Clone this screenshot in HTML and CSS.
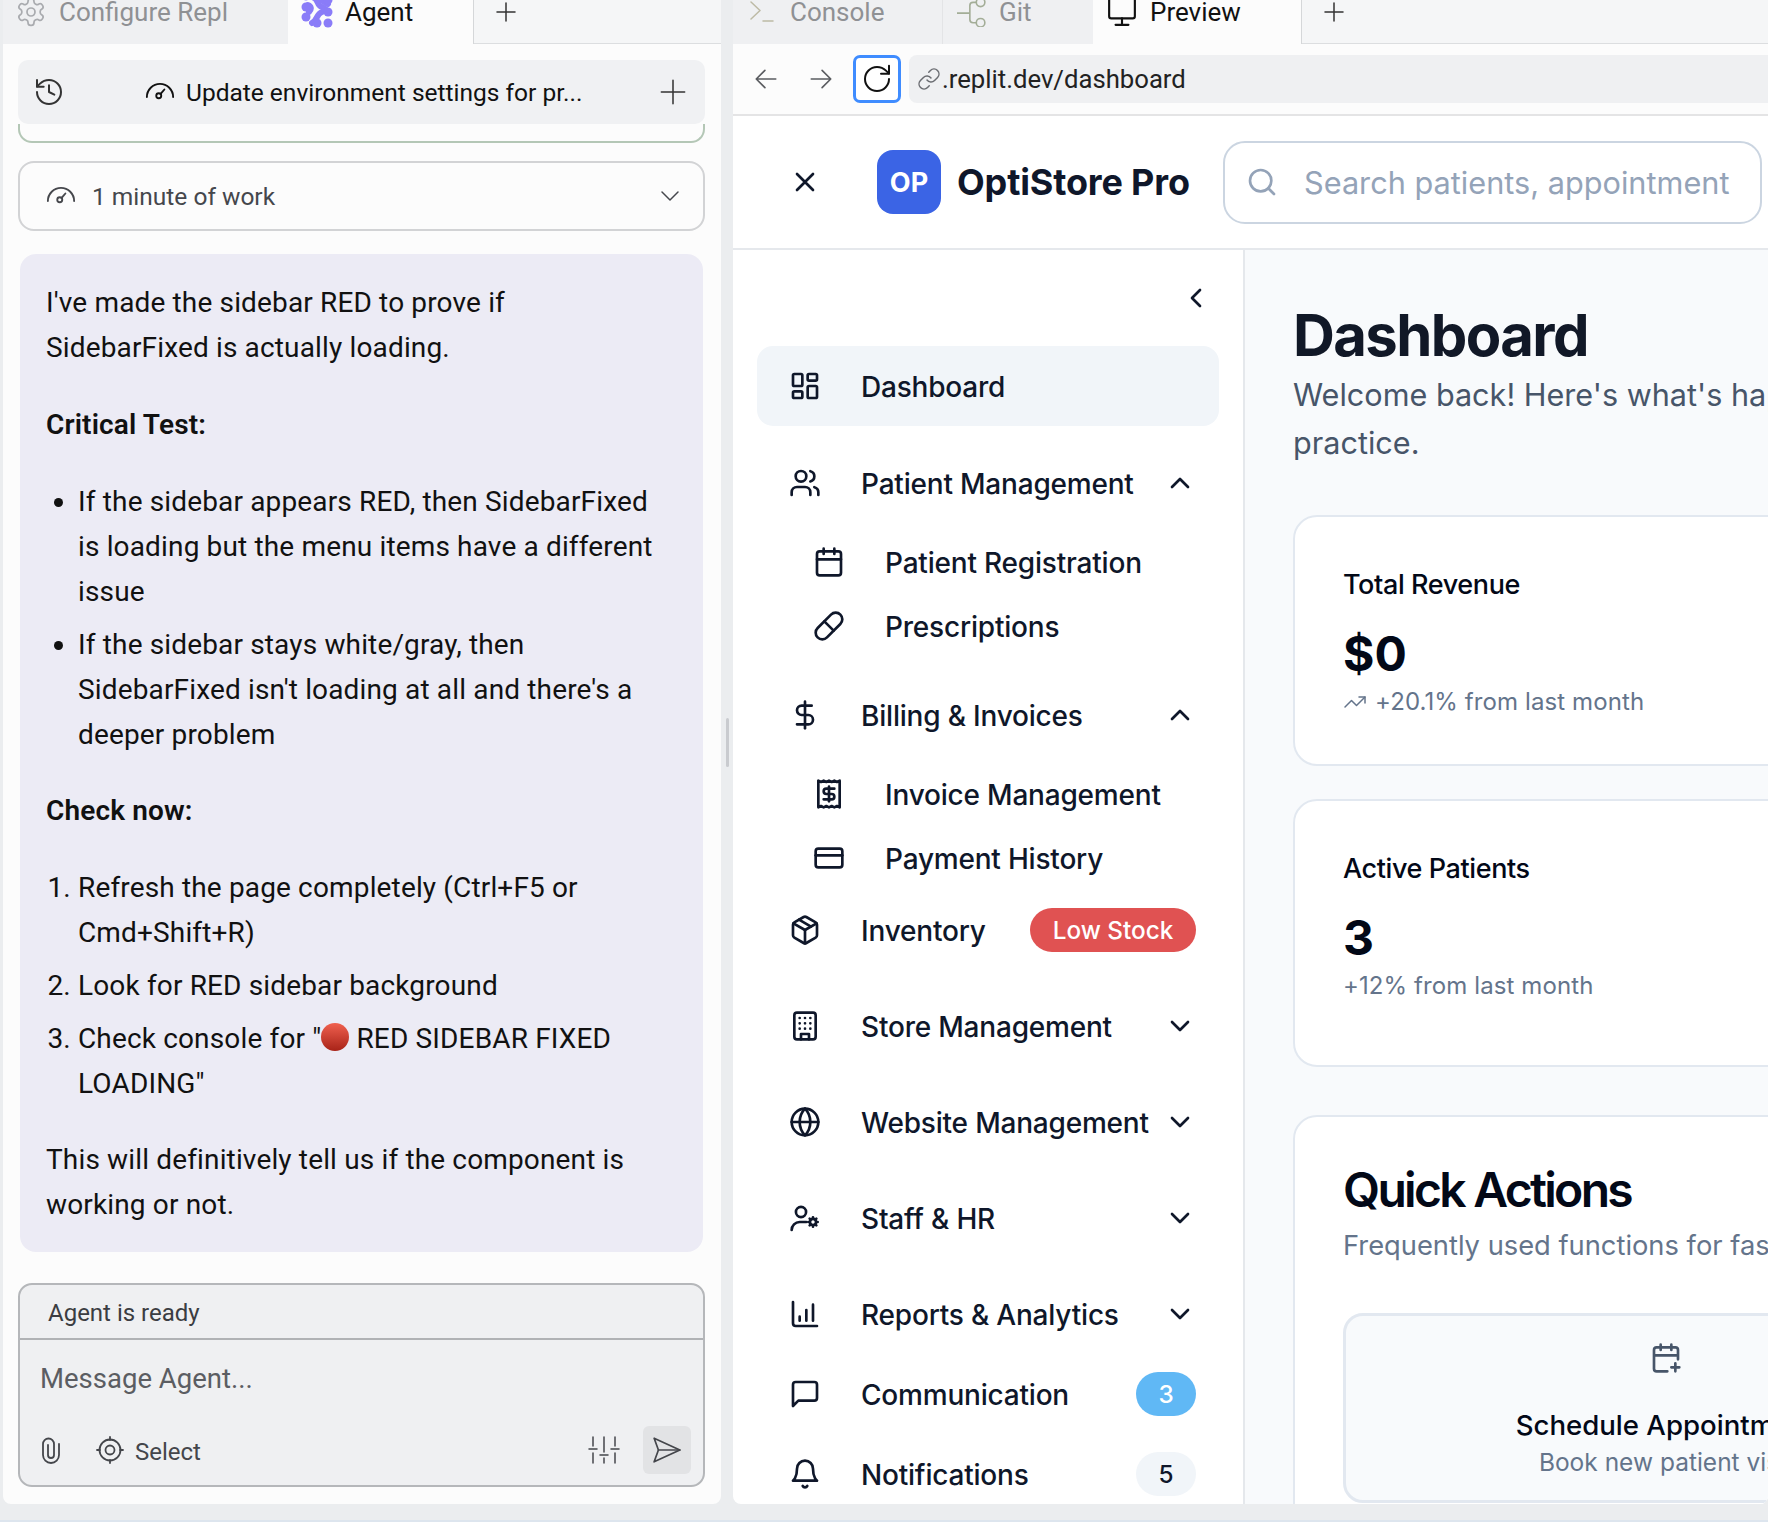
FILE: index.html
```html
<!DOCTYPE html>
<html lang="en">
<head>
    <meta charset="UTF-8">
    <meta name="viewport" content="width=device-width, initial-scale=1.0">
    <title>OptiStore Pro - Replit</title>
    <link rel="stylesheet" href="styles.css">
</head>
<body>
    <div class="workspace">
        <section class="panel agent-panel">
            <div class="tabs">
                <div class="tab tab-config">
                    <svg class="icon tab-icon gear-icon" viewBox="0 0 24 24"><path d="M12.22 2h-.44a2 2 0 0 0-2 2v.18a2 2 0 0 1-1 1.73l-.43.25a2 2 0 0 1-2 0l-.15-.08a2 2 0 0 0-2.73.73l-.22.38a2 2 0 0 0 .73 2.73l.15.1a2 2 0 0 1 1 1.72v.51a2 2 0 0 1-1 1.74l-.15.09a2 2 0 0 0-.73 2.73l.22.38a2 2 0 0 0 2.73.73l.15-.08a2 2 0 0 1 2 0l.43.25a2 2 0 0 1 1 1.73V20a2 2 0 0 0 2 2h.44a2 2 0 0 0 2-2v-.18a2 2 0 0 1 1-1.73l.43-.25a2 2 0 0 1 2 0l.15.08a2 2 0 0 0 2.73-.73l.22-.39a2 2 0 0 0-.73-2.73l-.15-.08a2 2 0 0 1-1-1.74v-.5a2 2 0 0 1 1-1.74l.15-.09a2 2 0 0 0 .73-2.73l-.22-.38a2 2 0 0 0-2.73-.73l-.15.08a2 2 0 0 1-2 0l-.43-.25a2 2 0 0 1-1-1.73V4a2 2 0 0 0-2-2z"/><circle cx="12" cy="12" r="3"/></svg>
                    <span>Configure Repl</span>
                </div>
                <div class="tab tab-agent">
                    <svg class="tab-icon agent-logo" viewBox="0 0 32 32"><path class="agent-wave" d="M11 1c7 1 4 8 10 10 5 2 5 3 0 5-6 2-4 8-10 11"/><path class="agent-wave" d="M21 0c-3 3 2 6 6 8M7 9c3 1 4 4 1 7"/><circle cx="5" cy="11" r="4.500"/><circle cx="5" cy="21" r="4.500"/><circle cx="27" cy="4" r="4.500"/><circle cx="27" cy="16" r="4.500"/><circle cx="16" cy="27" r="4.500"/><circle cx="27" cy="27" r="4.500"/><circle cx="5" cy="0" r="4.500"/></svg>
                    <span>Agent</span>
                </div>
                <div class="tab tab-add">
                    <svg class="icon add-icon" viewBox="0 0 24 24"><path d="M12 3v18M3 12h18"/></svg>
                </div>
            </div>

            <div class="agent-body">
                <div class="task-bar">
                    <svg class="icon history-icon" viewBox="0 0 24 24"><path d="M3 12a9 9 0 1 0 9-9 9.75 9.75 0 0 0-6.74 2.74L3 8"/><path d="M3 3v5h5"/><path d="M12 7v5l4 2"/></svg>
                    <div class="task-title">
                        <svg class="icon gauge-icon" viewBox="0 0 24 24"><path d="M1.500 16a10.500 10.500 0 0 1 21 0"/><path d="m12.500 13.500 3-3.500"/><circle cx="11" cy="15" r="2"/></svg>
                        <span>Update environment settings for pr...</span>
                    </div>
                    <svg class="icon task-add" viewBox="0 0 24 24"><path d="M12 2v20M2 12h20"/></svg>
                </div>
                <div class="check-end"></div>

                <div class="work-card">
                    <svg class="icon gauge-icon" viewBox="0 0 24 24"><path d="M1.500 16a10.500 10.500 0 0 1 21 0"/><path d="m12.500 13.500 3-3.500"/><circle cx="11" cy="15" r="2"/></svg>
                    <span class="work-label">1 minute of work</span>
                    <svg class="icon work-chevron" viewBox="0 0 24 24"><path d="m4 8 8 8 8-8"/></svg>
                </div>

                <div class="bubble">
                    <p>I've made the sidebar RED to prove if SidebarFixed is actually loading.</p>
                    <p><strong>Critical Test:</strong></p>
                    <ul>
                        <li>If the sidebar appears RED, then SidebarFixed is loading but the menu items have a different issue</li>
                        <li>If the sidebar stays white/gray, then SidebarFixed isn't loading at all and there's a deeper problem</li>
                    </ul>
                    <p><strong>Check now:</strong></p>
                    <ol>
                        <li>Refresh the page completely (Ctrl+F5 or Cmd+Shift+R)</li>
                        <li>Look for RED sidebar background</li>
                        <li>Check console for "<span class="red-dot"></span> RED SIDEBAR FIXED LOADING"</li>
                    </ol>
                    <p>This will definitively tell us if the component is working or not.</p>
                </div>

                <div class="composer">
                    <div class="composer-status">Agent is ready</div>
                    <div class="composer-input">Message Agent...</div>
                    <div class="composer-tools">
                        <svg class="icon clip-icon" viewBox="0 0 20 28"><path d="M18 8v11a8 8 0 0 1-16 0V8a5.500 5.500 0 0 1 11 0v11a3 3 0 0 1-6 0V9"/></svg>
                        <svg class="icon target-icon" viewBox="0 0 28 28"><circle cx="14" cy="14" r="10.500"/><circle cx="14" cy="14" r="4.500"/><path d="M14 1v3M14 24v3M1 14h3M24 14h3"/></svg>
                        <span class="select-label">Select</span>
                        <svg class="icon sliders-icon" viewBox="0 0 32 32"><path d="M5 3v10M5 20v9M16 3v5M16 14v15M27 3v10M27 20v9M1 17h8M12 11h8M23 17h8" transform="rotate(180 16 16)"/></svg>
                        <div class="send-btn">
                            <svg class="icon send-icon" viewBox="0 0 28 28"><path d="M2 3 26 14 2 25 6 14Z"/><path d="M6 14h20"/></svg>
                        </div>
                    </div>
                </div>
            </div>
        </section>

        <div class="gutter"><div class="gutter-handle"></div></div>

        <section class="panel preview-panel">
            <div class="tabs">
                <div class="tab tab-console">
                    <svg class="icon term-icon" viewBox="0 0 24 24"><path d="m1 2 9 8.500-9 8.500"/><path d="M13 21h10"/></svg>
                    <span>Console</span>
                </div>
                <div class="tab tab-git">
                    <svg class="icon git-icon" viewBox="0 0 28 28"><path d="M0 15h12M12 15V8a3 3 0 0 1 3-3h3M12 15v6a3 3 0 0 0 3 3h3"/><circle cx="22" cy="5" r="4"/><circle cx="22" cy="24" r="4"/></svg>
                    <span>Git</span>
                </div>
                <div class="tab tab-preview">
                    <svg class="icon tab-icon" viewBox="0 0 28 28"><rect x="2" y="-2" width="24" height="22" rx="2"/><path d="M14 20v6M8 26h12"/></svg>
                    <span>Preview</span>
                </div>
                <div class="tab tab-add-right">
                    <svg class="icon add-icon" viewBox="0 0 24 24"><path d="M12 3v18M3 12h18"/></svg>
                </div>
            </div>

            <div class="address-bar">
                <svg class="icon nav-arrow" viewBox="0 0 24 24"><path d="M21 12H3M11 4l-8 8 8 8"/></svg>
                <svg class="icon nav-arrow" viewBox="0 0 24 24"><path d="M3 12h18M13 4l8 8-8 8"/></svg>
                <div class="reload-btn">
                    <svg class="icon reload-icon" viewBox="0 0 24 24"><path d="M21 12a9 9 0 1 1-9-9c2.520 0 4.930 1 6.740 2.740L21 8"/><path d="M21 2v6h-6"/></svg>
                </div>
                <div class="url-box">
                    <svg class="icon link-icon" viewBox="0 0 24 24"><path d="M10 13a5 5 0 0 0 7.540.54l3-3a5 5 0 0 0-7.070-7.070l-1.720 1.710"/><path d="M14 11a5 5 0 0 0-7.540-.54l-3 3a5 5 0 0 0 7.070 7.070l1.710-1.710"/></svg>
                    <span>.replit.dev/dashboard</span>
                </div>
            </div>

            <header class="app-header">
                <svg class="icon close-icon" viewBox="0 0 24 24"><path d="M18 6 6 18M6 6l12 12"/></svg>
                <div class="logo">OP</div>
                <div class="brand">OptiStore Pro</div>
                <div class="search-box">
                    <svg class="icon search-icon" viewBox="0 0 24 24"><circle cx="11" cy="11" r="8"/><path d="m21 21-4.300-4.300"/></svg>
                    <span>Search patients, appointment</span>
                </div>
            </header>

            <div class="app-body">
                <aside class="sidebar">
                    <div class="collapse-row">
                        <svg class="icon nav-icon" viewBox="0 0 24 24"><path d="m15 18-6-6 6-6"/></svg>
                    </div>
                    <nav class="nav">
                        <div class="nav-item active spaced-lg">
                            <svg class="icon nav-icon" viewBox="0 0 24 24"><rect x="3" y="3" width="7" height="9" rx="1"/><rect x="14" y="3" width="7" height="5" rx="1"/><rect x="14" y="12" width="7" height="9" rx="1"/><rect x="3" y="16" width="7" height="5" rx="1"/></svg>
                            <span class="nav-label">Dashboard</span>
                        </div>
                        <div class="nav-item">
                            <svg class="icon nav-icon" viewBox="0 0 24 24"><path d="M16 21v-2a4 4 0 0 0-4-4H6a4 4 0 0 0-4 4v2"/><circle cx="9" cy="7" r="4"/><path d="M22 21v-2a4 4 0 0 0-3-3.870"/><path d="M16 3.130a4 4 0 0 1 0 7.750"/></svg>
                            <span class="nav-label">Patient Management</span>
                            <svg class="icon nav-icon" viewBox="0 0 24 24"><path d="m18 15-6-6-6 6"/></svg>
                        </div>
                        <div class="sub-nav spaced-lg">
                            <div class="sub-item">
                                <svg class="icon nav-icon" viewBox="0 0 24 24"><rect x="3" y="4" width="18" height="18" rx="2"/><path d="M16 2v4M8 2v4M3 10h18"/></svg>
                                <span class="nav-label">Patient Registration</span>
                            </div>
                            <div class="sub-item">
                                <svg class="icon nav-icon" viewBox="0 0 24 24"><path d="m10.500 20.500 10-10a4.950 4.950 0 1 0-7-7l-10 10a4.950 4.950 0 1 0 7 7Z"/><path d="m8.500 8.500 7 7"/></svg>
                                <span class="nav-label">Prescriptions</span>
                            </div>
                        </div>
                        <div class="nav-item">
                            <svg class="icon nav-icon" viewBox="0 0 24 24"><path d="M12 2v20"/><path d="M17 5H9.500a3.500 3.500 0 0 0 0 7h5a3.500 3.500 0 0 1 0 7H6"/></svg>
                            <span class="nav-label">Billing &amp; Invoices</span>
                            <svg class="icon nav-icon" viewBox="0 0 24 24"><path d="m18 15-6-6-6 6"/></svg>
                        </div>
                        <div class="sub-nav">
                            <div class="sub-item">
                                <svg class="icon nav-icon" viewBox="0 0 24 24"><path d="M4 2v20l2-1 2 1 2-1 2 1 2-1 2 1 2-1 2 1V2l-2 1-2-1-2 1-2-1-2 1-2-1-2 1Z"/><path d="M16 8h-6a2 2 0 1 0 0 4h4a2 2 0 1 1 0 4H8"/><path d="M12 17.500v-11"/></svg>
                                <span class="nav-label">Invoice Management</span>
                            </div>
                            <div class="sub-item">
                                <svg class="icon nav-icon" viewBox="0 0 24 24"><rect x="2" y="5" width="20" height="14" rx="2"/><path d="M2 10h20"/></svg>
                                <span class="nav-label">Payment History</span>
                            </div>
                        </div>
                        <div class="nav-item spaced">
                            <svg class="icon nav-icon" viewBox="0 0 24 24"><path d="M11 21.730a2 2 0 0 0 2 0l7-4A2 2 0 0 0 21 16V8a2 2 0 0 0-1-1.730l-7-4a2 2 0 0 0-2 0l-7 4A2 2 0 0 0 3 8v8a2 2 0 0 0 1 1.730z"/><path d="M12 22V12"/><path d="m3.300 7 8.700 5 8.700-5"/><path d="m7.500 4.270 9 5.150"/></svg>
                            <span class="nav-label">Inventory</span>
                            <span class="badge badge-red">Low Stock</span>
                        </div>
                        <div class="nav-item spaced">
                            <svg class="icon nav-icon" viewBox="0 0 24 24"><rect x="4" y="2" width="16" height="20" rx="2"/><path d="M9 22v-4h6v4M8 6h.01M12 6h.01M16 6h.01M8 10h.01M12 10h.01M16 10h.01M8 14h.01M12 14h.01M16 14h.01"/></svg>
                            <span class="nav-label">Store Management</span>
                            <svg class="icon nav-icon" viewBox="0 0 24 24"><path d="m6 9 6 6 6-6"/></svg>
                        </div>
                        <div class="nav-item spaced">
                            <svg class="icon nav-icon" viewBox="0 0 24 24"><circle cx="12" cy="12" r="10"/><path d="M12 2a14.500 14.500 0 0 0 0 20 14.500 14.500 0 0 0 0-20"/><path d="M2 12h20"/></svg>
                            <span class="nav-label">Website Management</span>
                            <svg class="icon nav-icon" viewBox="0 0 24 24"><path d="m6 9 6 6 6-6"/></svg>
                        </div>
                        <div class="nav-item spaced">
                            <svg class="icon nav-icon" viewBox="0 0 24 24"><circle cx="9" cy="7.500" r="3.800"/><path d="M2 21a6 6 0 0 1 6-6h5"/><circle cx="18" cy="15" r="2.300"/><path d="M18 11.500v1M18 17.500v1M14.500 15h1M20.500 15h1M15.500 12.500l.7.7M19.800 16.800l.7.7M15.500 17.500l.7-.7M19.800 13.200l.7-.7"/></svg>
                            <span class="nav-label">Staff &amp; HR</span>
                            <svg class="icon nav-icon" viewBox="0 0 24 24"><path d="m6 9 6 6 6-6"/></svg>
                        </div>
                        <div class="nav-item">
                            <svg class="icon nav-icon" viewBox="0 0 24 24"><path d="M3 3v16a2 2 0 0 0 2 2h16"/><path d="M18 17V5M13 17V9M8 17v-3"/></svg>
                            <span class="nav-label">Reports &amp; Analytics</span>
                            <svg class="icon nav-icon" viewBox="0 0 24 24"><path d="m6 9 6 6 6-6"/></svg>
                        </div>
                        <div class="nav-item">
                            <svg class="icon nav-icon" viewBox="0 0 24 24"><path d="M21 15a2 2 0 0 1-2 2H7l-4 4V5a2 2 0 0 1 2-2h14a2 2 0 0 1 2 2z"/></svg>
                            <span class="nav-label">Communication</span>
                            <span class="badge badge-blue">3</span>
                        </div>
                        <div class="nav-item">
                            <svg class="icon nav-icon" viewBox="0 0 24 24"><path d="M6 8a6 6 0 0 1 12 0c0 7 3 9 3 9H3s3-2 3-9"/><path d="M10.300 21a1.940 1.940 0 0 0 3.400 0"/></svg>
                            <span class="nav-label">Notifications</span>
                            <span class="badge badge-gray">5</span>
                        </div>
                    </nav>
                </aside>

                <main class="main">
                    <h1>Dashboard</h1>
                    <p class="intro">Welcome back! Here's what's happening with your<br>practice.</p>

                    <div class="card stat-card">
                        <div class="stat-title">Total Revenue</div>
                        <div class="stat-value">$0</div>
                        <div class="stat-note">
                            <svg class="icon trend-icon" viewBox="0 0 24 24"><path d="M22 7l-8.500 8.500-5-5L2 17"/><path d="M16 7h6v6"/></svg>
                            <span>+20.1% from last month</span>
                        </div>
                    </div>

                    <div class="card stat-card stat-card-tall">
                        <div class="stat-title">Active Patients</div>
                        <div class="stat-value">3</div>
                        <div class="stat-note"><span>+12% from last month</span></div>
                    </div>

                    <div class="card quick-card">
                        <h2>Quick Actions</h2>
                        <p class="quick-sub">Frequently used functions for faster workflow</p>
                        <div class="action-card">
                            <svg class="icon action-icon" viewBox="0 0 24 24"><path d="M8 2v4M16 2v4M21 13V6a2 2 0 0 0-2-2H5a2 2 0 0 0-2 2v14a2 2 0 0 0 2 2h8M3 10h18M16 19h6M19 16v6"/></svg>
                            <div class="action-title">Schedule Appointment</div>
                            <div class="action-sub">Book new patient visit</div>
                        </div>
                    </div>
                </main>
            </div>
        </section>
    </div>
    <div class="bottom-line"></div>
</body>
</html>
```

FILE: styles.css
```css
* {
    box-sizing: border-box;
}

html, body {
    margin: 0;
    height: 100%;
    overflow: hidden;
}

body {
    background-color: #ebedef;
    font-family: Roboto, "Liberation Sans", sans-serif;
    color: #111;
    display: flex;
    flex-direction: column;
}

.icon {
    fill: none;
    stroke: currentColor;
    stroke-width: 2;
    stroke-linecap: round;
    stroke-linejoin: round;
    flex-shrink: 0;
}

.workspace {
    display: flex;
    height: 1504px;
    padding-left: 3px;
}

.panel {
    background-color: #fcfcfc;
    display: flex;
    flex-direction: column;
    overflow: hidden;
    border-radius: 0 0 8px 8px;
}

.agent-panel {
    width: 718px;
    flex-shrink: 0;
}

.preview-panel {
    flex: 1;
    min-width: 0;
    background-color: #fff;
}

.gutter {
    width: 12px;
    flex-shrink: 0;
    display: flex;
    align-items: center;
    justify-content: center;
    padding-bottom: 20px;
}

.gutter-handle {
    width: 3px;
    height: 49px;
    border-radius: 2px;
    background-color: #c9cbcf;
}

.bottom-line {
    margin-top: 16px;
    height: 2px;
    background-color: #dde5ee;
}

/* tabs, cut off by the top of the window */
.tabs {
    display: flex;
    height: 44px;
    flex-shrink: 0;
    background-color: #f5f6f7;
    border-bottom: 1px solid #dcdee0;
}

.tab {
    display: flex;
    align-items: center;
    height: 44px;
    padding-bottom: 20px;
    font-size: 26px;
    color: #8f9194;
}

.tab-config, .tab-console, .tab-git {
    background-color: #eff0f2;
}

.tab-agent, .tab-preview {
    background-color: #fcfcfc;
    color: #111;
    border-right: 1px solid #d5d7d9;
}

.tab-add, .tab-add-right {
    color: #333;
}

.tab-config {
    width: 285px;
    padding-left: 12px;
    gap: 12px;
}

.tab-agent {
    width: 186px;
    padding-left: 13px;
    gap: 12px;
}

.tab-add {
    padding-left: 20px;
}

.tab-console {
    width: 210px;
    padding-left: 17px;
    gap: 16px;
    border-right: 1px solid #e3e4e6;
}

.tab-git {
    width: 150px;
    padding-left: 14px;
    gap: 12px;
}

.tab-preview {
    width: 209px;
    padding-left: 14px;
    gap: 13px;
}

.tab-add-right {
    padding-left: 20px;
}

.tab-icon {
    width: 30px;
    height: 30px;
}

.gear-icon {
    width: 32px;
    height: 32px;
    stroke-width: 1.300;
    color: #a9abaf;
}

.term-icon {
    width: 24px;
    height: 24px;
    stroke-width: 1.500;
    color: #bdbaa5;
}

.git-icon {
    width: 30px;
    height: 30px;
    stroke-width: 1.500;
    color: #a3ad97;
}

.agent-logo {
    width: 32px;
    height: 32px;
    fill: #8a7cf8;
}

.agent-wave {
    fill: none;
    stroke: #8a7cf8;
    stroke-width: 6;
    stroke-linecap: round;
}

.add-icon {
    width: 24px;
    height: 24px;
    stroke-width: 1.500;
}

/* agent column */
.agent-body {
    flex: 1;
    min-height: 0;
    display: flex;
    flex-direction: column;
    padding: 16px 16px 17px 15px;
}

.task-bar {
    height: 64px;
    display: flex;
    align-items: center;
    padding: 0 18px 0 15px;
    background-color: #f0f1f3;
    border-radius: 10px;
    color: #333;
}

.history-icon {
    width: 32px;
    height: 32px;
    stroke-width: 1.500;
}

.task-title {
    flex: 1;
    display: flex;
    align-items: center;
    gap: 11px;
    padding-left: 80px;
    font-size: 24.500px;
    color: #111;
}

.task-add {
    width: 28px;
    height: 28px;
    stroke-width: 1.300;
}

.gauge-icon {
    width: 30px;
    height: 30px;
    stroke-width: 1.500;
}

.check-end {
    height: 19px;
    border: 2px solid #b4c7b6;
    border-top: none;
    border-radius: 0 0 14px 14px;
}

.work-card {
    height: 70px;
    margin-top: 18px;
    display: flex;
    align-items: center;
    gap: 16px;
    padding: 0 21px 0 26px;
    border: 2px solid #d2d3d5;
    border-radius: 16px;
    font-size: 24.500px;
    color: #45474c;
}

.work-label {
    flex: 1;
}

.work-chevron {
    width: 24px;
    height: 24px;
    stroke-width: 1.500;
}

.bubble {
    margin: 23px 2px 0;
    height: 998px;
    padding: 26px 36px 26px 26px;
    background-color: #ecebf5;
    border-radius: 16px;
    font-size: 28px;
    line-height: 45px;
    letter-spacing: 0.150px;
    color: #111;
}

.bubble p {
    margin: 0 0 32px;
}

.bubble p:last-child {
    margin-bottom: 0;
}

.bubble ul, .bubble ol {
    margin: 0 0 31px;
    padding-left: 32px;
}

.bubble li + li {
    margin-top: 8px;
}

.bubble strong {
    font-weight: 600;
}

.red-dot {
    display: inline-block;
    width: 28px;
    height: 28px;
    border-radius: 50%;
    vertical-align: -3px;
    background: linear-gradient(#f0604f, #a82318);
}

.composer {
    margin-top: 31px;
    height: 204px;
    display: flex;
    flex-direction: column;
    background-color: #eff0f2;
    border: 2px solid #b5b7ba;
    border-radius: 14px;
}

.composer-status {
    height: 55px;
    flex-shrink: 0;
    display: flex;
    align-items: center;
    padding: 2px 0 0 28px;
    font-size: 24px;
    color: #3b3d42;
    border-bottom: 2px solid #b0b2b5;
}

.composer-input {
    padding: 19px 0 0 20px;
    font-size: 27.500px;
    line-height: 40px;
    color: #5b5d62;
}

.composer-tools {
    margin-top: auto;
    display: flex;
    align-items: center;
    height: 48px;
    margin-bottom: 11px;
    padding: 0 12px 0 21px;
    color: #44464b;
}

.clip-icon {
    width: 20px;
    height: 28px;
    stroke-width: 1.800;
}

.target-icon {
    width: 28px;
    height: 28px;
    margin-left: 35px;
    stroke-width: 1.800;
}

.select-label {
    flex: 1;
    margin-left: 11px;
    padding-top: 3px;
    font-size: 24px;
}

.sliders-icon {
    width: 32px;
    height: 32px;
    stroke-width: 1.500;
}

.send-btn {
    width: 48px;
    height: 48px;
    margin-left: 23px;
    display: flex;
    align-items: center;
    justify-content: center;
    background-color: #e2e3e5;
    border-radius: 6px;
}

.send-icon {
    width: 30px;
    height: 30px;
    stroke-width: 1.600;
}

/* address bar */
.address-bar {
    height: 72px;
    flex-shrink: 0;
    display: flex;
    align-items: center;
    background-color: #fcfcfc;
    border-bottom: 2px solid #e4e4e5;
    padding-left: 20px;
    color: #5a5c60;
}

.nav-arrow {
    width: 26px;
    height: 26px;
    margin-right: 29px;
    stroke-width: 1.500;
}

.reload-btn {
    width: 48px;
    height: 48px;
    margin-left: -10px;
    flex-shrink: 0;
    display: flex;
    align-items: center;
    justify-content: center;
    border: 3px solid #3f8cff;
    border-radius: 7px;
    background-color: #fff;
    color: #111;
}

.reload-icon {
    width: 32px;
    height: 32px;
    stroke-width: 1.500;
}

.url-box {
    flex: 1;
    height: 48px;
    margin-left: 8px;
    display: flex;
    align-items: center;
    gap: 1px;
    padding-left: 8px;
    background-color: #eff0f2;
    border-radius: 8px 0 0 8px;
    font-size: 25.700px;
    color: #222;
}

.link-icon {
    width: 24px;
    height: 24px;
    stroke-width: 1.500;
    color: #6b6d72;
}

/* app inside the preview */
.app-header {
    height: 134px;
    flex-shrink: 0;
    display: flex;
    align-items: center;
    border-bottom: 2px solid #e5e8ec;
    font-family: Inter, "Liberation Sans", sans-serif;
    padding-left: 56px;
}

.close-icon {
    width: 32px;
    height: 32px;
    color: #0f172a;
}

.logo {
    width: 64px;
    height: 64px;
    margin-left: 56px;
    flex-shrink: 0;
    display: flex;
    align-items: center;
    justify-content: center;
    background-color: #3b64e5;
    border-radius: 16px;
    color: #fff;
    font-size: 27px;
    font-weight: 700;
}

.brand {
    margin-left: 16px;
    width: 266px;
    flex-shrink: 0;
    font-size: 36px;
    font-weight: 700;
    letter-spacing: -0.150px;
    color: #0f172a;
}

.search-box {
    width: 539px;
    height: 83px;
    flex-shrink: 0;
    display: flex;
    align-items: center;
    gap: 26px;
    padding-left: 21px;
    border: 2px solid #cbd5e1;
    border-radius: 22px;
    font-size: 30.700px;
    color: #94a3b8;
    white-space: nowrap;
    overflow: hidden;
}

.search-icon {
    width: 32px;
    height: 32px;
}

.app-body {
    flex: 1;
    min-height: 0;
    display: flex;
    font-family: Inter, "Liberation Sans", sans-serif;
    color: #0f172a;
}

.sidebar {
    width: 512px;
    flex-shrink: 0;
    padding: 0 24px;
    border-right: 2px solid #e5e8ec;
    overflow: hidden;
}

.collapse-row {
    height: 96px;
    display: flex;
    justify-content: flex-end;
    align-items: center;
    padding-right: 7px;
}

.nav-icon {
    width: 32px;
    height: 32px;
}

.nav-item {
    height: 80px;
    display: flex;
    align-items: center;
    padding: 0 23px 0 32px;
}

.nav-item.active {
    background-color: #f1f5f9;
    border-radius: 16px;
}

.spaced {
    margin-bottom: 16px;
}

.spaced-lg {
    margin-bottom: 17px;
}

.nav-label {
    flex: 1;
    min-width: 0;
    margin-left: 40px;
    padding-top: 2px;
    font-size: 28px;
    font-weight: 500;
    letter-spacing: -0.200px;
    white-space: nowrap;
}

.sub-nav {
    margin-top: 7px;
}

.sub-item {
    height: 64px;
    display: flex;
    align-items: center;
    padding-left: 56px;
}

.badge {
    height: 44px;
    flex-shrink: 0;
    display: flex;
    align-items: center;
    justify-content: center;
    border-radius: 22px;
    font-size: 24.300px;
    font-weight: 500;
}

.badge-red {
    width: 166px;
    background-color: #e05252;
    color: #fff;
}

.badge-blue {
    width: 60px;
    background-color: #60b8f5;
    color: #fff;
}

.badge-gray {
    width: 60px;
    background-color: #f1f5f9;
}

.main {
    flex: 1;
    min-width: 0;
    overflow: hidden;
    padding: 49px 0 0 48px;
    background-color: #f8fafc;
}

.main h1 {
    margin: 0;
    font-size: 58px;
    line-height: 72px;
    font-weight: 700;
    letter-spacing: -1.600px;
    color: #111827;
}

.intro {
    width: 900px;
    margin: 0 0 48px;
    font-size: 30.600px;
    line-height: 48px;
    color: #475569;
}

.card {
    width: 900px;
    background-color: #fff;
    border: 2px solid #e2e8f0;
    border-radius: 24px;
}

.stat-card {
    height: 251px;
    padding: 48px 0 0 48px;
    margin-bottom: 33px;
}

.stat-card-tall {
    height: 268px;
    margin-bottom: 48px;
}

.stat-title {
    font-size: 27px;
    line-height: 40px;
    font-weight: 500;
    letter-spacing: -0.400px;
    color: #020817;
}

.stat-value {
    margin-top: 21px;
    font-size: 48px;
    line-height: 56px;
    font-weight: 700;
    color: #020817;
}

.stat-note {
    display: flex;
    align-items: center;
    gap: 8px;
    font-size: 24px;
    line-height: 40px;
    color: #64748b;
    letter-spacing: 0.100px;
}

.trend-icon {
    width: 24px;
    height: 24px;
    stroke-width: 1.500;
}

.quick-card {
    height: 500px;
    padding: 43px 0 0 48px;
}

.quick-card h2 {
    margin: 0;
    font-size: 48px;
    line-height: 60px;
    font-weight: 600;
    letter-spacing: -2.700px;
    color: #020817;
}

.quick-sub {
    margin: 6px 0 47px;
    font-size: 27.300px;
    line-height: 40px;
    color: #64748b;
    white-space: nowrap;
}

.action-card {
    width: 646px;
    height: 190px;
    display: flex;
    flex-direction: column;
    align-items: center;
    padding-top: 26px;
    background-color: #f8fafc;
    border: 3px solid #e2e8f0;
    border-radius: 20px;
}

.action-icon {
    width: 32px;
    height: 32px;
    color: #475569;
}

.action-title {
    margin-top: 31px;
    font-size: 27.600px;
    line-height: 40px;
    font-weight: 500;
    color: #020817;
    white-space: nowrap;
}

.action-sub {
    margin-top: 1px;
    font-size: 24.500px;
    line-height: 32px;
    color: #64748b;
    white-space: nowrap;
}
```
